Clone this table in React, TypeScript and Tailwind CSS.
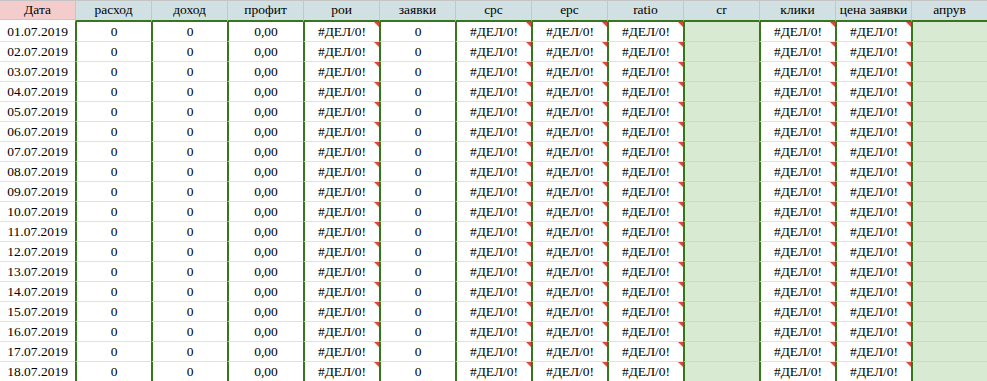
const headers = ["Дата", "расход", "доход", "профит", "рои", "заявки", "cpc", "epc", "ratio", "cr", "клики", "цена заявки", "апрув"];

// what each body column shows: text, error cell with a note marker, or empty green fill
type Kind = "date" | "zero" | "money" | "err" | "green";
const kinds: Kind[] = ["date", "zero", "zero", "money", "err", "zero", "err", "err", "err", "green", "err", "err", "green"];

const days = Array.from({ length: 18 }, (_, i) => `${String(i + 1).padStart(2, "0")}.07.2019`);

function Marker() {
    return (
        <svg className="absolute top-0 right-0" width="5" height="5" viewBox="0 0 5 5">
            <polygon points="0,0 5,0 5,5" fill="#e0463c" />
        </svg>
    );
}

function Cell({ kind, date }: { kind: Kind; date: string }) {
    const first = kind === "date";
    const base = first
        ? "border-b border-[#e2e2e2]"
        : kind === "green"
          ? "border-l-2 border-l-[#38761d] border-b border-b-[#c9dcc2] bg-[#d9ead3]"
          : "border-l-2 border-l-[#38761d] border-b border-b-[#e2e2e2]";
    let text = "";
    if (kind === "date") text = date;
    if (kind === "zero") text = "0";
    if (kind === "money") text = "0,00";
    if (kind === "err") text = "#ДЕЛ/0!";
    return (
        <div className={`relative h-5 flex items-center justify-center text-black ${base}`}>
            {text}
            {kind === "err" && <Marker />}
        </div>
    );
}

export default function App() {
    return (
        <div className="w-[987px] h-[381px] overflow-hidden bg-white font-['Liberation_Serif',serif] text-[13.5px] leading-none">
            <div className="grid grid-cols-[75px_repeat(11,76px)_1fr] border-t border-[#c4c4c4]">
                {headers.map((h, i) =>
                    i === 0 ? (
                        <div key={h} className="h-[19px] flex items-center justify-center bg-[#f4cccc] border-b border-[#c8c8c8]">
                            {h}
                        </div>
                    ) : (
                        <div key={h} className="h-[21px] pb-[2px] flex items-center justify-center bg-[#d0e0e3] border-l border-[#bfc8ca] border-b-2 border-b-[#38761d] bg-clip-padding">
                            {h}
                        </div>
                    )
                )}
                {days.map((d) => kinds.map((k, j) => <Cell key={d + j} kind={k} date={d} />))}
            </div>
        </div>
    );
}
